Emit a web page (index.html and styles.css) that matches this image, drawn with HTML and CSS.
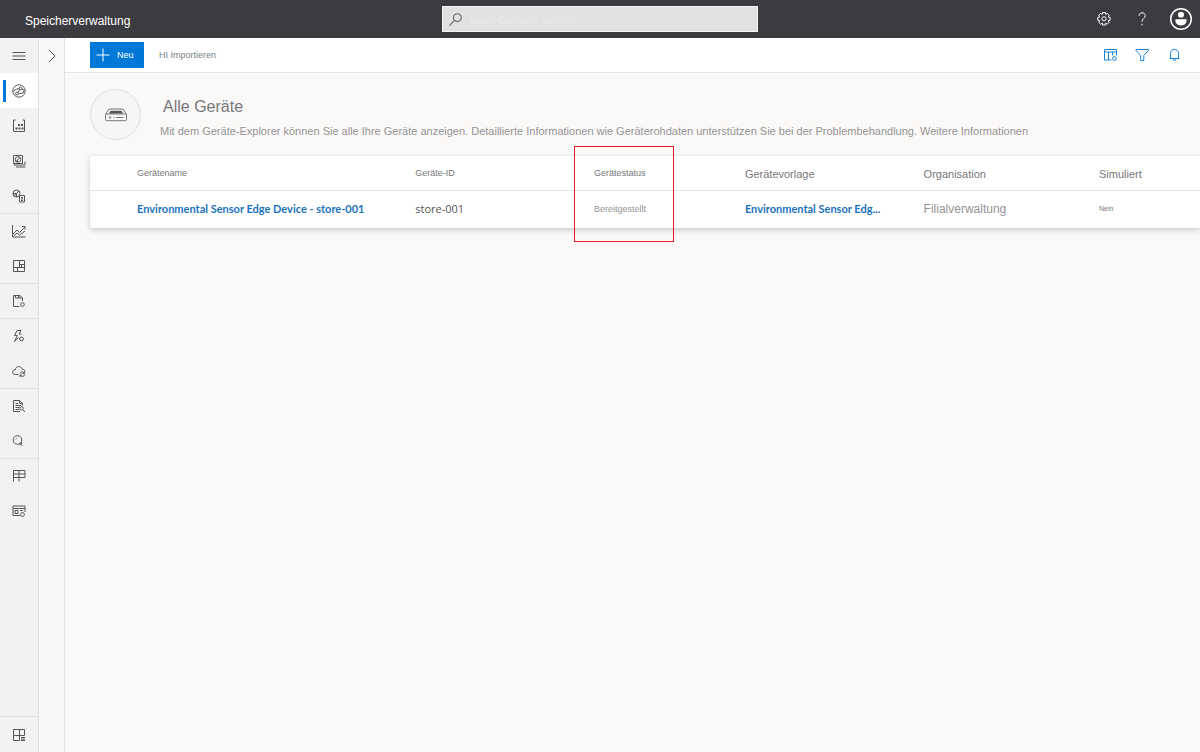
FILE: index.html
```html
<!DOCTYPE html>
<html lang="de">
<head>
<meta charset="utf-8">
<meta name="viewport" content="width=device-width, initial-scale=1">
<title>Speicherverwaltung</title>
<link rel="stylesheet" href="styles.css">
</head>
<body>
<header class="topbar">
  <div class="brand">Speicherverwaltung</div>
  <label class="search">
    <svg class="search-icon" viewBox="0 0 16 16" aria-hidden="true"><circle cx="10" cy="6" r="4.2"/><path d="M7 9 1.500 14.500"/></svg>
    <input class="search-input" type="search" placeholder="Nach Geräten suchen" aria-label="Nach Geräten suchen">
  </label>
  <div class="top-actions">
    <button class="icon-button" type="button" aria-label="Einstellungen">
      <svg class="icon" viewBox="0 0 16 16"><path d="M6.700 1.500h2.600l.4 1.900 1.600-1 1.900 1.900-1 1.600 1.900.5v2.800l-1.900.4 1 1.700-1.900 1.900-1.600-1-.4 1.900H6.700l-.4-1.900-1.700 1-1.900-1.900 1-1.700-1.900-.4V6.400l1.900-.5-1-1.600 1.900-1.900 1.700 1z"/><circle cx="8" cy="7.800" r="2.100"/></svg>
    </button>
    <button class="icon-button" type="button" aria-label="Hilfe">
      <svg class="icon" viewBox="0 0 16 16"><path d="M5 4.800C5 .7 11.200.8 11.200 4.600 11.200 7.500 8 7.300 8 10.800M8 12.800v1.600"/></svg>
    </button>
    <button class="account-button" type="button" aria-label="Konto">
      <svg class="avatar" viewBox="0 0 24 24"><circle class="ring" cx="12" cy="12" r="10.300"/><circle cx="12" cy="7.800" r="3"/><path d="M6.500 12.300h11c.8 3.700-2 6.200-5.500 6.200s-6.300-2.500-5.500-6.200z"/></svg>
    </button>
  </div>
</header>
<div class="shell">
  <nav class="rail" aria-label="Hauptnavigation">
    <div class="rail-group">
      <button class="rail-item" type="button" aria-label="Menü"><svg class="icon" viewBox="0 0 16 16"><path d="M1.500 4.500h13M1.500 8h13M1.500 11.500h13"/></svg></button>
    </div>
    <div class="rail-group">
      <a class="rail-item active" href="#geraete" aria-label="Geräte" aria-current="page"><svg class="icon" viewBox="0 0 16 16"><circle cx="8" cy="8" r="6.200"/><circle cx="9.500" cy="5.500" r="1.400"/><circle cx="6" cy="10.500" r="1.400"/><path d="M8.800 6.700 7 9.400M2.300 8.500 5.500 6l2.600-.2M7.500 10.700l4.500-.7 1-2.500M10.700 6.200l3 1"/></svg></a>
      <a class="rail-item" href="#gruppen" aria-label="Gerätegruppen"><svg class="icon" viewBox="0 0 16 16"><path d="M2.500 2v11.500h11V2M2.500 2h2M11.500 2h2"/><path class="solid" d="M7 6h2v2H7zM10 6h2v2h-2zM4.500 9.500h2v2h-2zM7.500 9.500h2v2h-2zM10.500 9.500h2v2h-2z"/></svg></a>
      <a class="rail-item" href="#vorlagen" aria-label="Gerätevorlagen"><svg class="icon" viewBox="0 0 16 16"><path d="M2.500 2.500h9v8h-9zM4 12h10V8.500M5 14h9.500M3.500 11v1.500"/><circle cx="7" cy="6.500" r="2.800"/><path d="m4.500 9 5-5M6.500 6.500V9"/></svg></a>
      <a class="rail-item" href="#edge" aria-label="Edgemanifeste"><svg class="icon" viewBox="0 0 16 16"><circle cx="5.500" cy="5.500" r="3.500"/><path d="m3 8 5-5M5.500 5v4M2 5.500h4M8.500 7.500h5v6.500h-5zM10 9.500h2M10 11h2M10 12.500h2"/></svg></a>
    </div>
    <div class="rail-group">
      <a class="rail-item" href="#explorer" aria-label="Daten-Explorer"><svg class="icon" viewBox="0 0 16 16"><path d="M1.500 2v12h13M2 11l4-4 2.500 2.500L14 4M11 3.500h3v3M3 12.500l3-2.500 2.500 2L14 8"/></svg></a>
      <a class="rail-item" href="#dashboards" aria-label="Dashboards"><svg class="icon" viewBox="0 0 16 16"><path d="M2.500 2.500h11v11h-11zM2.500 9.500h11M8.500 2.500v7M8.500 6.500h5M6.500 9.500v4M10.500 6.500v3"/></svg></a>
    </div>
    <div class="rail-group">
      <a class="rail-item" href="#auftraege" aria-label="Aufträge"><svg class="icon" viewBox="0 0 16 16"><path d="M8.500 13.500h-6v-11H9L11.500 5v3M4.500 2.500V5h3V2.500M8 2.500V5h3.500"/><circle cx="11.500" cy="11.500" r="1.800"/></svg></a>
    </div>
    <div class="rail-group">
      <a class="rail-item" href="#regeln" aria-label="Regeln"><svg class="icon" viewBox="0 0 16 16"><path d="M6 2.500h4L8 6h2.500M6 2.500 3.500 7.500h2.800L3.500 13.500 7.500 9.500"/><circle cx="10.500" cy="11" r="1.900"/></svg></a>
      <a class="rail-item" href="#export" aria-label="Datenexport"><svg class="icon" viewBox="0 0 16 16"><path d="M7.500 11.500H4.300C.8 11.500.8 7 4.100 7 4.600 2.500 10.500 2.500 11.300 6.400 13.300 6.500 14 7 14 8.500"/><path d="M9 10.500C9.500 8.700 12 8.500 13.200 10M13.500 8.500v2h-2M14 11.500c-.8 2.200-3.600 2.500-4.700.8M9 14v-2h2"/></svg></a>
    </div>
    <div class="rail-group">
      <a class="rail-item" href="#protokolle" aria-label="Überwachungsprotokolle"><svg class="icon" viewBox="0 0 16 16"><path d="M9 13.500H2.500v-11h6l3 3v2M8.500 2.500v3h3M4.500 5.500H7M4.500 7.500H10M4.500 9.500h4M4.500 11.500h4M11.500 11.500l2.500 2.500"/><circle cx="10.500" cy="10.300" r="1.700"/></svg></a>
      <a class="rail-item" href="#analyse" aria-label="Analyse"><svg class="icon" viewBox="0 0 16 16"><circle cx="6.500" cy="7" r="4.300"/><path d="M9 10.500 11.500 13M4.800 6.500l1-1M8 11h2.500V9"/></svg></a>
    </div>
    <div class="rail-group rail-open">
      <a class="rail-item" href="#anwendung" aria-label="Anwendung"><svg class="icon" viewBox="0 0 16 16"><path d="M2.500 13.500v-11h11.500v7H2.500M2.500 6h11.500M8 2.500v11"/></svg></a>
      <a class="rail-item" href="#anpassung" aria-label="Anpassung"><svg class="icon" viewBox="0 0 16 16"><path d="M9 12.500H2v-9.500h12v6M2 5.500h12M4 7.500h3v3H4zM9 7.500h3"/><circle cx="11.500" cy="11.500" r="1.900"/></svg></a>
    </div>
    <div class="rail-foot">
      <a class="rail-item" href="#startseite" aria-label="Startseite"><svg class="icon" viewBox="0 0 16 16"><path d="M13.500 8.500v-6h-11v11h6M2.500 8.500h11M8.500 2.500v11M10 10.500h4M10 12h4M10 13.500h4"/></svg></a>
    </div>
  </nav>
  <aside class="side-panel">
    <button class="expand" type="button" aria-label="Erweitern"><svg class="icon" viewBox="0 0 16 16"><path d="m5 2 6 6-6 6"/></svg></button>
  </aside>
  <main class="content">
    <div class="toolbar">
      <button class="new-button" type="button"><svg class="icon" viewBox="0 0 16 16"><path d="M8 1.500v13M1.500 8h13"/></svg><span>Neu</span></button>
      <button class="import-button" type="button">HI Importieren</button>
      <div class="tools">
        <button class="tool-button" type="button" aria-label="Spaltenoptionen"><svg class="icon" viewBox="0 0 16 16"><path d="M9.500 13H2.500v-10.500h12v6M2.500 5h12M6.500 5v8M10.500 5v3.500"/><circle cx="12.500" cy="11.500" r="1.900"/></svg></button>
        <button class="tool-button" type="button" aria-label="Filter"><svg class="icon" viewBox="0 0 16 16"><path d="M2 2.500h12.500v1L9.800 8.500v5H6.700v-5L2 3.500z"/></svg></button>
        <button class="tool-button" type="button" aria-label="Benachrichtigungen"><svg class="icon" viewBox="0 0 16 16"><path d="M4.500 11.500V6.500c0-5.500 8-5.500 8 0v5M3.500 11.500h10M7 12c0 2 3 2 3 0"/></svg></button>
      </div>
    </div>
    <section class="page">
      <div class="page-head">
        <div class="device-badge"><svg class="device-icon" viewBox="0 0 24 16" aria-hidden="true"><path d="M1.500 7.500 5 2h14l3.500 5.500v5.200a1 1 0 0 1-1 1h-19a1 1 0 0 1-1-1zM1.500 7h21M9.500 10.500h1M12 10.500h7.500"/><circle cx="6" cy="10.500" r=".8"/><path class="solid" d="M6.500 3.800h11l1.700 2.700H4.800z"/></svg></div>
        <div class="page-text">
          <h1 class="page-title">Alle Geräte</h1>
          <p class="page-intro">Mit dem Geräte-Explorer können Sie alle Ihre Geräte anzeigen. Detaillierte Informationen wie Geräterohdaten unterstützen Sie bei der Problembehandlung. <a class="more-link" href="#info">Weitere Informationen</a></p>
        </div>
      </div>
      <table class="devices">
        <colgroup><col class="col-name"><col class="col-id"><col class="col-status"><col class="col-template"><col class="col-org"><col class="col-sim"></colgroup>
        <thead>
          <tr><th scope="col">Gerätename</th><th scope="col">Geräte-ID</th><th class="status-head" scope="col">Gerätestatus<span class="highlight"></span></th><th class="large" scope="col">Gerätevorlage</th><th class="large" scope="col">Organisation</th><th class="large" scope="col">Simuliert</th></tr>
        </thead>
        <tbody>
          <tr><td><a class="device-link" href="#store-001">Environmental Sensor Edge Device - store-001</a></td><td class="device-id">store-001</td><td class="status">Bereitgestellt</td><td><a class="device-link" href="#vorlage">Environmental Sensor Edg...</a></td><td class="org">Filialverwaltung</td><td class="simulated">Nein</td></tr>
        </tbody>
      </table>
    </section>
  </main>
</div>
</body>
</html>
```
FILE: styles.css
```css
* { box-sizing: border-box; }

body {
  margin: 0;
  min-height: 100vh;
  display: flex;
  flex-direction: column;
  overflow-x: hidden;
  background: #faf9f8;
  color: #77777a;
  font: 12px/16px "Liberation Sans", Arial, sans-serif;
}

button {
  margin: 0;
  padding: 0;
  border: 0;
  background: none;
  color: inherit;
  font: inherit;
}

a { color: inherit; text-decoration: none; }

.icon {
  display: block;
  width: 16px;
  height: 16px;
  fill: none;
  stroke: currentColor;
  stroke-width: 1;
}

.icon .solid { fill: currentColor; stroke: none; }

.topbar {
  display: grid;
  grid-template-columns: 1fr 316px 1fr;
  align-items: center;
  height: 38px;
  background: #3c3b40;
  color: #fff;
}

.brand { padding: 4px 0 0 25px; }

.search {
  display: flex;
  align-items: center;
  gap: 6px;
  height: 26px;
  padding: 0 5px;
  background: #e1e1e1;
  border: 1px solid #f3f3f3;
}

.search-icon {
  flex: none;
  width: 15px;
  height: 15px;
  fill: none;
  stroke: #666;
  stroke-width: 1.2;
}

.search-input {
  flex: 1;
  min-width: 0;
  padding: 2px 0 0;
  border: 0;
  outline: 0;
  background: none;
  color: #333;
  font: inherit;
  font-size: 11px;
}

.search-input::placeholder { color: #e9e9e9; opacity: 1; }

.top-actions {
  display: flex;
  justify-content: flex-end;
  align-items: center;
  gap: 16px;
  padding-right: 7px;
}

.icon-button {
  display: grid;
  place-items: center;
  width: 22px;
}

.avatar {
  display: block;
  width: 24px;
  height: 24px;
  fill: #fff;
}

.ring { fill: none; stroke: #fff; stroke-width: 1.5; }

.shell { flex: 1; display: flex; }

.rail {
  flex: none;
  display: flex;
  flex-direction: column;
  width: 39px;
  background: #f3f2f1;
  border-right: 1px solid #e1e1e1;
  color: #555;
}

.rail-group { box-shadow: 0 1px #e1e0df; }
.rail-open { box-shadow: none; }
.rail-foot { margin-top: auto; border-top: 1px solid #e1e0df; }

.rail-item {
  display: flex;
  align-items: center;
  justify-content: center;
  width: 100%;
  height: 35px;
}

.active {
  background: linear-gradient(#0078d7, #0078d7) 3px center / 3px 22px no-repeat #fff;
}

.side-panel {
  flex: none;
  width: 26px;
  background: #f8f8f8;
  border-right: 1px solid #e1e1e1;
  color: #555;
}

.expand {
  display: grid;
  place-items: center;
  width: 100%;
  height: 35px;
}

.content { flex: 1; min-width: 0; }

.toolbar {
  display: flex;
  align-items: center;
  gap: 15px;
  height: 35px;
  padding: 0 18px 0 25px;
  background: #fff;
  border-bottom: 1px solid #e5e5e5;
  color: #77818a;
  font-size: 9px;
}

.new-button {
  display: flex;
  align-items: center;
  gap: 6px;
  width: 54px;
  height: 26px;
  padding-left: 5px;
  background: #0078d7;
  color: #fff;
}

.tools {
  display: flex;
  gap: 16px;
  margin-left: auto;
  color: #1883d7;
}

.page { padding: 16px 0 0 25px; }

.page-head {
  display: flex;
  align-items: center;
  gap: 19px;
}

.device-badge {
  flex: none;
  display: grid;
  place-items: center;
  width: 51px;
  height: 51px;
  background: #f6f6f6;
  border: 1px solid #dfdfdf;
  border-radius: 50%;
}

.device-icon {
  width: 24px;
  height: 16px;
  fill: none;
  stroke: #777;
}

.device-icon .solid { fill: #555; stroke: none; }

.page-title {
  margin: 0 0 6px;
  padding: 6px 0 0 3px;
  font-size: 16px;
  font-weight: 400;
  line-height: 20px;
}

.page-intro { margin: 0; color: #949496; font-size: 11px; }

.devices {
  width: 100%;
  margin-top: 16px;
  table-layout: fixed;
  border-collapse: separate;
  border-spacing: 0;
  background: #fff;
  border-radius: 3px 0 0 3px;
  box-shadow: 0 2px 6px #0003;
}

.col-name { width: 29.3%; }
.col-id { width: 16.1%; }
.col-status { width: 13.6%; }
.col-template { width: 16.1%; }
.col-org { width: 15.8%; }
.col-sim { width: 9.1%; }

.devices th,
.devices td {
  padding: 0;
  text-align: left;
  white-space: nowrap;
}

.devices th {
  height: 35px;
  border-bottom: 1px solid #e5e5e5;
  font-size: 9px;
  font-weight: 400;
}

.devices td {
  height: 37px;
  padding-bottom: 2px;
}

.devices th:first-child,
.devices td:first-child { padding-left: 47px; }

.devices .large {
  padding-top: 2px;
  font-size: 11px;
}

.status-head { position: relative; }

.highlight {
  position: absolute;
  top: -10px;
  left: -20px;
  width: 100px;
  height: 96px;
  border: 1px solid #ed1c24;
}

.device-link {
  color: #1b73bd;
  font: 700 11px/16px Lato, "Open Sans", sans-serif;
}

.devices .device-id {
  color: #555;
  font: 11px/16px "Open Sans", "Noto Sans", sans-serif;
}

.status { color: #949496; font-size: 9px; }
.org { color: #949496; font-size: 12px; }
.simulated { font-size: 7px; }
```
